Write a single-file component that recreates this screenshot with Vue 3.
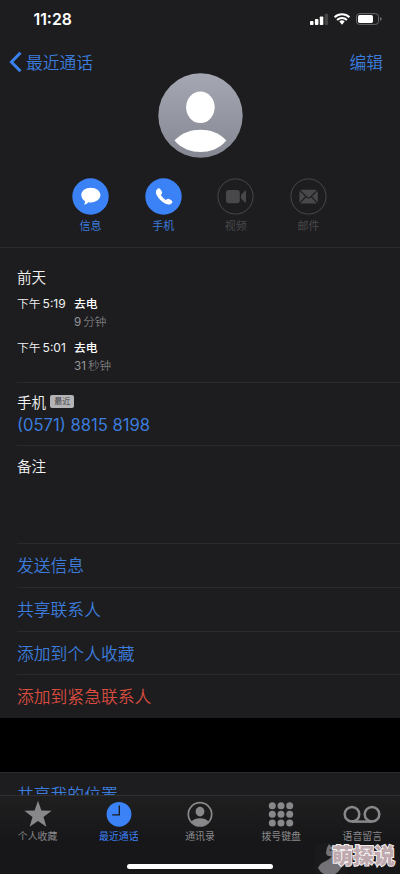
<script setup>
const calls = [
  { time: '5:19', kind: '去电', num: '9', unit: '分钟' },
  { time: '5:01', kind: '去电', num: '31', unit: '秒钟' },
]
const links = [
  { text: '发送信息' },
  { text: '共享联系人' },
  { text: '添加到个人收藏' },
  { text: '添加到紧急联系人', danger: true },
]
const dots = [0, 1, 2, 3, 4, 5, 6, 7, 8]
</script>

<template>
  <div class="screen">
    <main class="content">
      <header class="status">
        <span class="clock">11:28</span>
        <svg class="indicators" width="76" height="16" viewBox="0 0 76 16">
          <g fill="#fff">
            <rect x="0" y="9" width="3.5" height="4" rx="0.8" />
            <rect x="4.9" y="7" width="3.5" height="6" rx="0.8" />
            <rect x="9.8" y="4.4" width="3.5" height="8.6" rx="0.8" />
            <rect x="14.6" y="1.8" width="3.5" height="11.2" rx="0.8" fill="#454547" />
            <path d="M29.3 9.6a3.8 3.8 0 0 1 5.4 0L32 12.8z" />
          </g>
          <g fill="none" stroke="#fff" stroke-width="2.1">
            <path d="M24.6 5.2a10.6 10.6 0 0 1 14.8 0" />
            <path d="M27.1 8a7 7 0 0 1 9.8 0" />
          </g>
          <rect x="46.5" y="1.6" width="22" height="10.8" rx="3" fill="none" stroke="#69696b" />
          <rect x="48" y="3.1" width="15" height="7.8" rx="1.7" fill="#fff" />
          <path d="M70 5v4q1.800-.5 1.800-2T70 5z" fill="#69696b" />
        </svg>
      </header>

      <nav class="nav">
        <a class="back">
          <svg width="14" height="22" viewBox="0 0 14 22">
            <path d="M11.5 1.7 2.4 11l9.1 9.3" fill="none" stroke="#3b82ee" stroke-width="3" />
          </svg>
          <span>最近通话</span>
        </a>
        <a>编辑</a>
      </nav>

      <svg class="avatar" width="85" height="85" viewBox="0 0 85 85">
        <defs>
          <linearGradient id="avatarFill" x1="0" y1="0" x2="0" y2="1">
            <stop offset="0" stop-color="#a5a7b2" />
            <stop offset="1" stop-color="#858792" />
          </linearGradient>
        </defs>
        <circle cx="42.5" cy="42.5" r="42.2" fill="url(#avatarFill)" />
        <ellipse cx="42.4" cy="34.3" rx="14.3" ry="15.7" fill="#fff" />
        <path d="M16.5 67.5C24 59.5 33 56.7 42.5 56.7S61 59.5 68.3 67.5C61 76 52 79 42.5 79S24 76 16.5 67.5z" fill="#fff" />
      </svg>

      <section class="actions">
        <div class="action">
          <svg width="37" height="37" viewBox="0 0 37 37">
            <circle cx="18.5" cy="18.5" r="18.2" fill="#3b82f6" />
            <path d="M18.8 9.8c5.5 0 9.6 3.2 9.6 7.3s-4.1 7.3-9.6 7.3c-.9 0-1.7-.1-2.4-.2-1.3 1.5-3 2.3-4.6 2.4.8-.9 1.3-2 1.2-3.4-2.3-1.3-3.7-3.5-3.7-6.1 0-4.1 4-7.3 9.5-7.3z" fill="#fff" />
          </svg>
          <span>信息</span>
        </div>
        <div class="action">
          <svg width="37" height="37" viewBox="0 0 37 37">
            <circle cx="18.5" cy="18.5" r="18.2" fill="#3b82f6" />
            <path d="M12.5 10.9c.9-.8 2-.7 2.7.2l1.6 2.5c.5.8.4 1.6-.2 2.3-.8.8-.6 1.3 0 2.2.8 1.2 1.9 2.3 3.1 3.1.9.6 1.4.8 2.2 0 .7-.6 1.5-.7 2.3-.2l2.4 1.6c.9.7 1 1.7.2 2.6-1.5 1.7-3.7 1.8-6.2.6-4.2-2-7.5-5.4-9.2-9.3-1-2.4-.6-4.3 1.100-5.600z" fill="#fff" />
          </svg>
          <span>手机</span>
        </div>
        <div class="action off">
          <svg width="37" height="37" viewBox="0 0 37 37">
            <circle cx="18.5" cy="18.5" r="17.6" fill="none" stroke="#48484a" />
            <rect x="9" y="12" width="13.8" height="13.2" rx="2.4" fill="#48484a" />
            <path d="M24 16.9 27.7 13q1.300-1 1.300.5v10.200q0 1.500-1.300.5L24 20.300z" fill="#48484a" />
          </svg>
          <span>视频</span>
        </div>
        <div class="action off">
          <svg width="37" height="37" viewBox="0 0 37 37">
            <circle cx="18.5" cy="18.5" r="17.6" fill="none" stroke="#48484a" />
            <rect x="9.4" y="11.7" width="18.4" height="13.8" rx="1.8" fill="#48484a" />
            <path d="m9.5 12 7.5 7.3q1.600 1.300 3.200 0l7.500-7.300M9.500 25.300l6.400-6.800M27.700 25.300l-6.400-6.800" fill="none" stroke="#1d1d1f" stroke-width="1.1" />
          </svg>
          <span>邮件</span>
        </div>
      </section>

      <section class="history">
        <h2>前天</h2>
        <div v-for="c in calls" :key="c.time" class="call">
          <div class="when"><span>下午</span><b>{{ c.time }}</b></div>
          <div class="what">
            <strong>{{ c.kind }}</strong>
            <small><b>{{ c.num }}</b>{{ c.unit }}</small>
          </div>
        </div>
      </section>

      <section class="phone">
        <div class="phone-label">手机<span class="badge">最近</span></div>
        <div class="number">(0571) 8815 8198</div>
      </section>

      <section class="notes">备注</section>

      <section class="links">
        <a v-for="l in links" :key="l.text" :class="{ danger: l.danger }">{{ l.text }}</a>
      </section>

      <div class="gap"></div>
      <section class="location">共享我的位置</section>
    </main>

    <footer class="tabs">
      <div class="tab">
        <svg width="28" height="28" viewBox="0 0 28 28">
          <path d="m14 .8 3.400 9.700 10.200.2-8.100 6.200 2.900 9.800L14 20.900l-8.400 5.800 2.900-9.800L.4 10.700l10.200-.2z" fill="#88888a" />
        </svg>
        <span>个人收藏</span>
      </div>
      <div class="tab active">
        <svg width="28" height="28" viewBox="0 0 28 28">
          <circle cx="14" cy="14.3" r="12.4" fill="#3b82f6" />
          <path d="M14.3 5.6v9.200H7.200" fill="none" stroke="#19191b" stroke-width="1.3" />
        </svg>
        <span>最近通话</span>
      </div>
      <div class="tab">
        <svg width="28" height="28" viewBox="0 0 28 28">
          <circle cx="14" cy="14.3" r="11.7" fill="none" stroke="#88888a" stroke-width="1.7" />
          <ellipse cx="14" cy="11.6" rx="4.4" ry="4.9" fill="#88888a" />
          <path d="M5.4 21.5q3.300-3.200 8.600-3.200t8.600 3.200Q19 25.700 14 25.700t-8.600-4.200z" fill="#88888a" />
        </svg>
        <span>通讯录</span>
      </div>
      <div class="tab">
        <svg width="28" height="28" viewBox="0 0 28 28">
          <circle v-for="d in dots" :key="d" :cx="5.3 + (d % 3) * 8.7" :cy="5.7 + Math.floor(d / 3) * 8.6" r="3.5" fill="#88888a" />
        </svg>
        <span>拨号键盘</span>
      </div>
      <div class="tab">
        <svg width="38" height="28" viewBox="0 0 38 28">
          <g fill="none" stroke="#88888a" stroke-width="2.5">
            <circle cx="9" cy="14.3" r="7.3" />
            <circle cx="29" cy="14.3" r="7.3" />
            <path d="M9 21.6h20" />
          </g>
        </svg>
        <span>语音留言</span>
      </div>
      <div class="home"></div>
      <div class="watermark">
        <svg width="90" height="34" viewBox="0 0 90 34">
          <path d="M5 3h32v31H5z" fill="#29272b" opacity=".2" />
          <path d="m19 4 2.500 3h5l1 12L34 24l-6 8-3 2H14Q10 32 8 28q2-5 8-7 4-2 6-5-5 1-6-3 0-5 3-9z" fill="#747277" />
          <circle cx="20.5" cy="10" r="1" fill="#302e32" />
        </svg>
        <span>萌探说</span>
      </div>
    </footer>
  </div>
</template>

<style>
body {
  background: #000;
}
</style>

<style scoped>
.screen {
  position: relative;
  width: 400px;
  height: 874px;
  overflow: hidden;
  display: flex;
  flex-direction: column;
  background: #1d1d1f;
  color: #f2f2f2;
  font-family: Inter, "Noto Sans CJK SC", sans-serif;
}
.content {
  height: 795px;
  flex: none;
  overflow: hidden;
}
.status {
  height: 40px;
  box-sizing: border-box;
  display: flex;
  justify-content: space-between;
  padding: 9px 14px 0 33.5px;
}
.clock {
  margin-top: 1px;
  font-size: 15.8px;
  line-height: 20px;
  font-weight: 600;
  color: #fff;
}
.indicators {
  margin-top: 3px;
}
.nav {
  height: 22px;
  padding: 11px 17px 0 9px;
  display: flex;
  justify-content: space-between;
  font-size: 16.8px;
  line-height: 24px;
  color: #3c7cdc;
  font-weight: 350;
}
.back {
  display: flex;
  gap: 3px;
}
.avatar {
  display: block;
  margin: 0 auto;
}
.actions {
  display: grid;
  grid-template-columns: repeat(4, 72.6px);
  justify-content: center;
  height: 69px;
  padding: 20px 1px 0 0;
  border-bottom: 1px solid #2a2a2c;
}
.action {
  display: flex;
  flex-direction: column;
  align-items: center;
  font-size: 11px;
  line-height: 16px;
  color: #3c7cdc;
}
.action svg {
  margin-top: -0.5px;
}
.action span {
  margin-top: 3.5px;
}
.off {
  color: #48484a;
}
.history {
  height: 114px;
  margin-left: 17px;
  padding-top: 20px;
  border-bottom: 1px solid #2a2a2c;
}
h2 {
  margin: 0 0 6px;
  font-size: 14.6px;
  font-weight: 350;
  line-height: 20px;
}
.call {
  display: flex;
  height: 44px;
  font-size: 11.8px;
}
.when {
  width: 57px;
  line-height: 20px;
  display: flex;
  gap: 2px;
  font-weight: 350;
}
.when b {
  font-weight: 400;
  font-size: 12px;
}
.what {
  display: flex;
  flex-direction: column;
}
.what strong {
  font-weight: 500;
  line-height: 20px;
  color: #fff;
}
.what small {
  display: flex;
  gap: 2px;
  font-size: 11.6px;
  font-weight: 300;
  line-height: 16px;
  color: #98989b;
}
.what small b {
  font-weight: 400;
}
.phone {
  height: 52px;
  margin-left: 17px;
  padding-top: 10px;
  border-bottom: 1px solid #2a2a2c;
}
.phone-label {
  display: flex;
  align-items: center;
  font-size: 14.6px;
  line-height: 20px;
  font-weight: 350;
}
.badge {
  margin: -3px 0 0 4px;
  width: 24px;
  height: 13px;
  border-radius: 2px;
  background: #b4b4b6;
  color: #3a3a3c;
  font-size: 8px;
  line-height: 13px;
  text-align: center;
}
.number {
  font-size: 16.6px;
  line-height: 24px;
  color: #3c7cdc;
}
.notes {
  height: 86px;
  margin-left: 17px;
  padding-top: 11px;
  font-size: 14.6px;
  line-height: 20px;
  font-weight: 350;
}
.links {
  padding-left: 17px;
}
.links a {
  display: block;
  height: 42.75px;
  border-top: 1px solid #2a2a2c;
  font-size: 16.8px;
  line-height: 45px;
  font-weight: 350;
  color: #3c7cdc;
}
.links .danger {
  color: #d94c40;
}
.gap {
  height: 54px;
  background: #000;
  border-bottom: 1px solid #2a2a2c;
}
.location {
  padding-left: 17px;
  font-size: 16.8px;
  line-height: 44px;
  font-weight: 350;
  color: #3c7cdc;
}
.tabs {
  height: 78px;
  display: grid;
  grid-template-columns: repeat(5, 81.2px);
  margin-left: -3px;
  padding-top: 4px;
  border-top: 1px solid #303032;
  background: linear-gradient(#1f1f20, #171719 45px);
}
.tab {
  display: flex;
  flex-direction: column;
  align-items: center;
  color: #88888a;
  font-size: 9.9px;
  line-height: 14px;
}
.tab span {
  margin-top: 1px;
}
.active {
  color: #3b82f6;
}
.home {
  position: absolute;
  left: 127px;
  top: 864px;
  width: 146px;
  height: 5px;
  border-radius: 3px;
  background: #fff;
}
.watermark {
  position: absolute;
  left: 310px;
  top: 840px;
  width: 90px;
  height: 34px;
}
.watermark span {
  position: absolute;
  left: 22px;
  top: 3px;
  font-size: 21px;
  line-height: 25px;
  font-weight: 900;
  color: #bea9ae;
  -webkit-text-stroke: 2px #f3eff0;
  paint-order: stroke fill;
  white-space: nowrap;
}
</style>
